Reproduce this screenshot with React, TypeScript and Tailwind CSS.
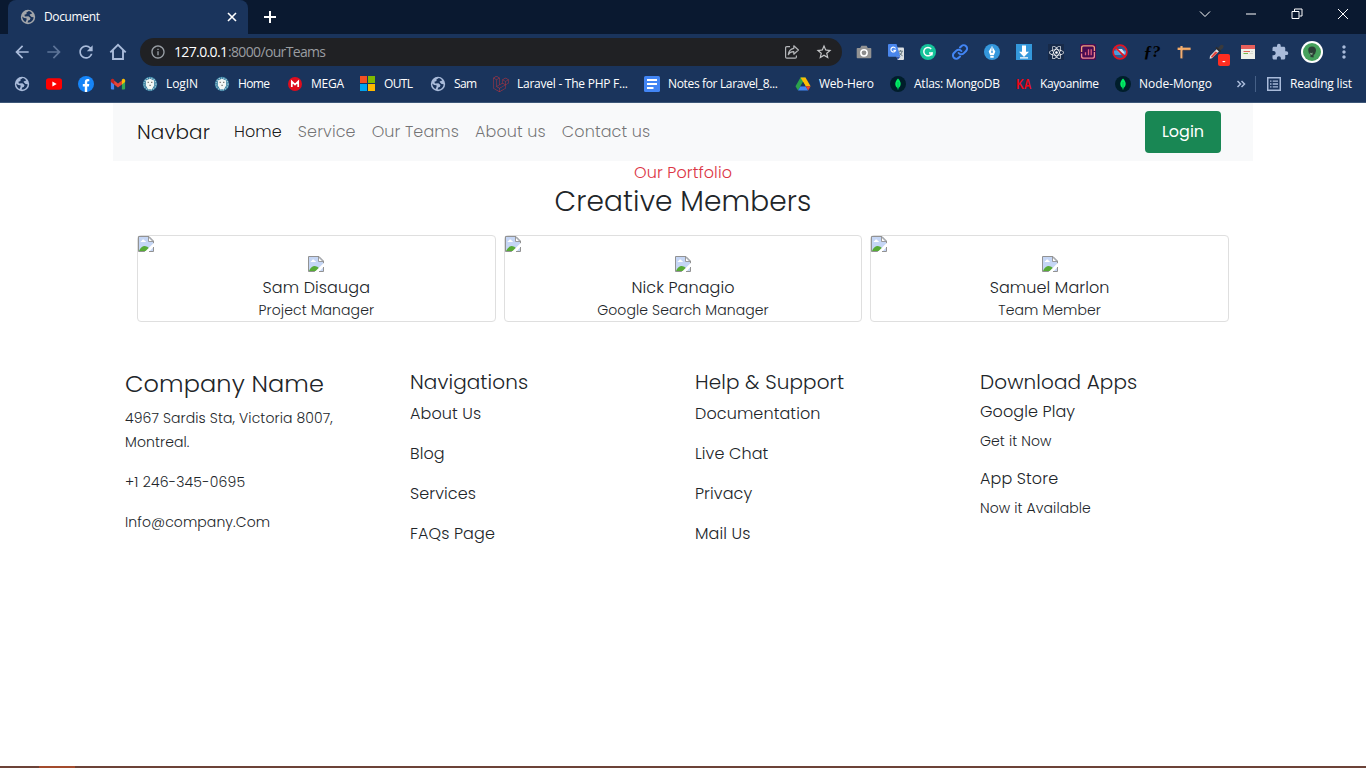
import { useLayoutEffect, useRef, useState, type ReactNode } from "react";
import {
  MdArrowBack,
  MdArrowForward,
  MdExtension,
  MdInfoOutline,
  MdMoreVert,
  MdRefresh,
  MdStarBorder,
} from "react-icons/md";
import { FaLaravel, FaReact } from "react-icons/fa";

/** One line of text whose tracking is adjusted so that it fills a given width. */
function FitText({ w, children, className = "" }: { w: number; children: string; className?: string }) {
  const ref = useRef<HTMLSpanElement>(null);
  const [spacing, setSpacing] = useState(0);
  useLayoutEffect(() => {
    if (ref.current) {
      const natural = ref.current.getBoundingClientRect().width;
      setSpacing((w - natural) / Math.max(1, children.length - 1));
    }
  }, [w, children]);
  return (
    <span className={`inline-block whitespace-nowrap ${className}`} style={{ width: w }}>
      <span ref={ref} style={{ letterSpacing: spacing }}>
        {children}
      </span>
    </span>
  );
}

/* ---------- icons ---------- */

const Globe = ({ color, hole }: { color: string; hole: string }) => (
  <svg width="16" height="16" viewBox="0 0 16 16">
    <circle cx="8" cy="8" r="7.2" fill={color} />
    <path d="M8.8 2 L6.4 3.6 L6.6 5 L4.4 5.8 L4.9 7.4 L8.4 7.3 L10.5 9 L9.8 10.9 L8.2 11.4 L7.6 13.6 C11 13.7 13.6 11.2 13.6 8.2 L11.6 7.9 L10 6.6 L9.6 5.4 L12.2 4.6 C11.3 3.1 10 2.2 8.8 2Z M2.3 7.4 L4.1 8.9 L6.5 9.3 L6.6 10.8 L5.6 13 C3.6 12 2.1 9.7 2.3 7.4Z" fill={hole} />
  </svg>
);

const HomeIcon = () => (
  <svg width="18" height="18" viewBox="0 0 18 18" fill="none" stroke="#a9bbda" strokeWidth="1.9">
    <path d="M1.3 9.4 L9 1.9 L16.7 9.4 M4 7.2 V16 H14 V7.2" />
  </svg>
);

const YouTube = () => (
  <svg width="16" height="16" viewBox="0 0 16 16">
    <rect y="2.2" width="16" height="11.6" rx="2.8" fill="#f00" />
    <path d="M6.4 5.5 L10.7 8 L6.4 10.5Z" fill="#fff" />
  </svg>
);

const Facebook = () => (
  <svg width="16" height="16" viewBox="0 0 16 16">
    <circle cx="8" cy="8" r="8" fill="#1685f8" />
    <path d="M6.8 16 V10.4 H4.8 V8 H6.8 V6.2 C6.8 4.1 8 3.1 9.8 3.1 L11.3 3.2 V5.2 H10.3 C9.5 5.2 9.2 5.6 9.2 6.3 V8 H11.3 L10.9 10.4 H9.2 V16Z" fill="#fff" />
  </svg>
);

const Gmail = () => (
  <svg width="16" height="16" viewBox="0 0 16 16">
    <path d="M.9 4.4 H4.1 V13.5 H2 Q.9 13.5 .9 12.4Z" fill="#4285f4" />
    <path d="M11.9 4.4 H15.1 V12.4 Q15.1 13.5 14 13.5 H11.9Z" fill="#34a853" />
    <path d="M4.1 4.6 L8 7.6 L11.9 4.6 V8.5 L8 11.5 L4.1 8.5Z" fill="#ea4335" />
    <path d="M.9 4.2 Q1 2.4 2.8 2.7 L4.1 3.6 V8.5 L.9 6.1Z" fill="#c5221f" />
    <path d="M15.1 4.2 Q15 2.4 13.2 2.7 L11.9 3.6 V8.5 L15.1 6.1Z" fill="#fbbc04" />
  </svg>
);

const Seal = () => (
  <svg width="16" height="16" viewBox="0 0 16 16">
    <circle cx="8" cy="8" r="7.2" fill="#2f7a9c" />
    <circle cx="8" cy="8" r="6" fill="none" stroke="#a5c6d6" strokeWidth="1.2" strokeDasharray="1.4 1" />
    <path d="M3.8 4.4 L8 2.8 L12.2 4.4 V9.5 L10 13.2 H6 L3.8 9.5Z" fill="#f2f7f5" />
    <path d="M5.6 5.8h1.3v1.3H5.6z M9 5.8h1.4v1.3H9z M7.4 8.7h1.4v1.4H7.4z" fill="#7d7c78" />
  </svg>
);

const Mega = () => (
  <svg width="16" height="16" viewBox="0 0 16 16">
    <circle cx="8" cy="8" r="7" fill="#df0d1d" />
    <path d="M4.8 11 V5.4 L8 8.5 L11.2 5.4 V11" fill="none" stroke="#fff" strokeWidth="1.7" />
  </svg>
);

const Microsoft = () => (
  <svg width="16" height="16" viewBox="0 0 16 16">
    <path d="M0 0h7v7H0z" fill="#f25022" />
    <path d="M8 0h7v7H8z" fill="#7fba00" />
    <path d="M0 8h7v7H0z" fill="#00a4ef" />
    <path d="M8 8h7v7H8z" fill="#ffb900" />
  </svg>
);

const Docs = () => (
  <svg width="16" height="16" viewBox="0 0 16 16">
    <rect width="16" height="16" rx="1.6" fill="#4285f4" />
    <path d="M3 4h10M3 8h10M3 12h6.5" stroke="#fff" strokeWidth="1.8" />
  </svg>
);

const Drive = () => (
  <svg width="16" height="16" viewBox="0 0 16 16">
    <path d="M5.5 1.5 H10.5 L8 6 L3 14.5 L.5 10.2Z" fill="#2ba24c" />
    <path d="M5.5 1.5 H10.5 L15.6 10.2 H10.6Z" fill="#fbbc04" />
    <path d="M5.5 10.2 H10.6 L13.2 14.5 H3Z" fill="#4285f4" />
    <path d="M10.6 10.2 H15.6 L13.2 14.5Z" fill="#ea4335" />
    <path d="M8 6 L10.5 10.2 H5.5Z" fill="#1a345c" />
  </svg>
);

const Mongo = () => (
  <svg width="16" height="16" viewBox="0 0 16 16">
    <circle cx="8" cy="8" r="8" fill="#001e2b" />
    <path d="M8 2.5 C11.6 6 11.5 10 8.4 12.1 L8.2 13.7 H7.8 L7.6 12.1 C4.5 10 4.4 6 8 2.5Z" fill="#00ed64" />
    <path d="M8 6 V13" stroke="#00a651" strokeWidth=".7" />
  </svg>
);

const Camera = () => (
  <svg width="16" height="16" viewBox="0 0 16 16">
    <path d="M1.5 4 H4.2 L5.4 1.8 H10.6 L11.8 4 H14.5 Q15.3 4 15.3 4.8 V13.3 Q15.3 14.2 14.5 14.2 H1.5 Q.7 14.2 .7 13.3 V4.8 Q.7 4 1.5 4Z" fill="#939393" />
    <circle cx="8" cy="8.8" r="3.9" fill="#fff" />
    <circle cx="8" cy="8.8" r="2.4" fill="#8d8d8d" />
  </svg>
);

const Translate = () => (
  <svg width="16" height="16" viewBox="0 0 16 16">
    <path d="M6 3.4 H15 Q16 3.4 16 4.4 V15 Q16 16 15 16 H9.5Z" fill="#dbdfe2" />
    <path d="M1 0 H8.5 L12.4 12.7 H1 Q0 12.7 0 11.7 V1 Q0 0 1 0Z" fill="#4a86ec" />
    <path d="M8.7 12.7 H12.4 L9.5 16Z" fill="#3155b0" />
    <path d="M7.5 4.5 A2.4 2.4 0 1 0 7.6 6.4 H5.4" fill="none" stroke="#fff" strokeWidth="1.1" />
    <path d="M10.6 7.2h4.2M12.6 6v1.2M14.2 7.4Q13.4 10.3 11.6 11.2M11.4 8.6Q12.6 11 14.6 11.8" fill="none" stroke="#65767d" />
  </svg>
);

const Grammarly = () => (
  <svg width="16" height="16" viewBox="0 0 16 16">
    <circle cx="8" cy="8" r="8" fill="#15c39a" />
    <path d="M11.2 4.9 A4.2 4.2 0 1 0 12 8.9 H9" fill="none" stroke="#fff" strokeWidth="1.5" />
    <path d="M12 8.5 V11.4" stroke="#fff" strokeWidth="1.2" />
  </svg>
);

const LinkIcon = () => (
  <svg width="16" height="16" viewBox="0 0 24 24" fill="none" stroke="#4285f4" strokeWidth="3" strokeLinecap="round">
    <path d="M10 13.5a5 5 0 0 0 7.5.5l3.6-3.6a5 5 0 0 0-7.1-7.1l-2 2" />
    <path d="M14 10.5a5 5 0 0 0-7.5-.5l-3.6 3.6a5 5 0 0 0 7.1 7.1l2-2" />
  </svg>
);

const Pen = () => (
  <svg width="16" height="16" viewBox="0 0 16 16">
    <circle cx="8" cy="8" r="8" fill="#3497dc" />
    <path d="M8 2 L11.3 7.5 L9.8 11.2 H6.2 L4.7 7.5Z M6.3 12h3.4v1.7H6.3z" fill="#fff" />
    <path d="M8 3 V7.5" stroke="#3497dc" strokeWidth=".7" />
    <circle cx="8" cy="8" r=".9" fill="#3497dc" />
  </svg>
);

const Download = () => (
  <svg width="16" height="16" viewBox="0 0 16 16">
    <path d="M0 0h16v16H0z" fill="#3498db" />
    <path d="M6 1.5 H10 V7.8 H13 L8 13 L3 7.8 H6Z M4 13.2h8v1.2H4z" fill="#fff" />
  </svg>
);

const Chart = () => (
  <svg width="16" height="16" viewBox="0 0 16 16">
    <rect width="16" height="16" rx="1.5" fill="#480b52" />
    <path d="M1.6 8 V3.8 Q1.6 1.8 3.7 1.8 H12.3 Q14.4 1.8 14.4 3.8 V7" fill="none" stroke="#f2a07a" strokeWidth="1.3" />
    <path d="M14.4 8 V12.2 Q14.4 14.2 12.3 14.2 H3.7 Q1.6 14.2 1.6 12.2 V9.5" fill="none" stroke="#ee8a91" strokeWidth="1.3" />
    <path d="M5.5 11.3V8.3M8.5 11.3V5.2M11.2 11.3V5.2" stroke="#e0607f" strokeWidth="1.3" />
  </svg>
);

const Blocked = () => (
  <svg width="16" height="16" viewBox="0 0 16 16">
    <circle cx="8" cy="8" r="6.7" fill="#2f5d94" />
    <path d="M2 6.5h12v4.5H2z" fill="#4c9bdc" />
    <path d="M3.5 5h6.5l3 4.5H8z" fill="#d4e1ee" />
    <circle cx="8" cy="8" r="6.9" fill="none" stroke="#e21422" strokeWidth="1.7" />
    <path d="M3.3 3.3 L12.7 12.7" stroke="#e21422" strokeWidth="1.8" />
  </svg>
);

const Ruler = () => (
  <svg width="16" height="16" viewBox="0 0 16 16">
    <path d="M1.6 3.6h13v2.4h-13z" fill="#f6ab66" />
    <path d="M4.4 2h2.2v12.4H4.4z" fill="#f2ae70" />
    <path d="M7 6.3h7.2M6.9 7v7" stroke="#5c4a45" strokeWidth=".7" />
  </svg>
);

const Dropper = () => (
  <svg width="16" height="16" viewBox="0 0 16 16">
    <path d="M9.6 4.6 L12.4 1.2 Q14.2 .2 15.4 1.6 Q16 3 14.8 4.2 L11.7 6.8Z" fill="#3a3a3c" />
    <path d="M8 3.4 L12.5 7.9" stroke="#2c2c2e" strokeWidth="2" />
    <path d="M8.6 5.2 L10.9 7.4 L4 14.2 L1.6 14.8 L2 12.1Z" fill="#dfdfdf" />
    <path d="M7.4 7.6 L9.8 8.4 L4 14 L3 12.6Z" fill="#e3443b" />
  </svg>
);

const Page = () => (
  <svg width="16" height="16" viewBox="0 0 16 16">
    <path d="M1 1h14v14H1z" fill="#eef0ea" />
    <path d="M1 1h14v4H1z" fill="#e65f5b" />
    <path d="M3.5 7.5H10" stroke="#e2625a" />
    <path d="M3.5 9.5H8" stroke="#79b94d" />
    <path d="M11 7.5h2M9.5 9.5H13" stroke="#d5d8d0" />
  </svg>
);

const Avatar = () => (
  <svg width="22" height="22" viewBox="0 0 22 22">
    <circle cx="11" cy="11" r="11" fill="#fff" />
    <circle cx="11" cy="11" r="9" fill="#46a15c" />
    <path d="M7.2 9.2 Q7.2 5.6 11 5.6 Q15.2 5.8 15 9.8 L14 13 L12.6 14 V16.4 L9.4 16 L9.6 13.6 L7.8 12Z" fill="#2b3f36" />
    <path d="M8.6 11.4 L10.4 12.2 L11.4 11.6 L11.6 13.6 L10 13.8Z" fill="#8aaf92" />
  </svg>
);

const Share = () => (
  <svg width="16" height="16" viewBox="0 0 16 16" fill="none" stroke="#b4b6b9" strokeWidth="1.2" strokeLinejoin="round">
    <path d="M6 2.6 H2.8 Q1.6 2.6 1.6 3.8 V13 Q1.6 14.2 2.8 14.2 H11.2 Q12.4 14.2 12.4 13 V11.6" />
    <path d="M9.8 1.8 L14.4 6 L9.8 10.2 V7.7 C7 7.6 5.3 8.7 4.3 10.6 C4.7 6.8 6.7 4.8 9.8 4.3Z" />
  </svg>
);

const ReadingList = () => (
  <svg width="14" height="14" viewBox="0 0 14 14" fill="none" stroke="#a9bbda" strokeWidth="1.5">
    <path d="M.75 .75h12.5v12.5H.75z" />
    <path d="M3 4.2h1.5M5.7 4.2H11M3 7h1.5M5.7 7H11M3 9.8h1.5M5.7 9.8H11" strokeWidth="1.3" />
  </svg>
);

const BrokenImage = () => (
  <svg width="16" height="16" viewBox="0 0 16 16" className="block shrink-0">
    <path d="M.5 .5 H11 L15.5 5 V15.5 H.5Z" fill="#c5d6f5" />
    <path d="M2.6 6.1 Q2.5 4.8 3.8 4.7 Q4.2 3.2 5.6 3.6 Q6.7 3.9 6.8 5 Q8 5.1 8 6.1Z" fill="#fff" />
    <path d="M1 15 Q3.2 10.1 6.8 10 Q9.5 10 11.5 12.5 L12 15Z" fill="#57ab36" />
    <path d="M16 6.8 L6.6 16 H11 L16 10.6Z" fill="#fff" />
    <path d="M6.8 15.5 H.5 V.5 H11 L15.5 5 V7.2 M15.5 11 V15.5 H11" fill="none" stroke="#929292" />
    <path d="M10.5 1 V5.5 H15Z" fill="#fff" stroke="#929292" strokeWidth=".9" />
  </svg>
);

/* ---------- browser chrome ---------- */

const extensions: ReactNode[] = [
  <Camera />,
  <Translate />,
  <Grammarly />,
  <LinkIcon />,
  <Pen />,
  <Download />,
  <span className="flex size-4 items-center justify-center bg-[#172a49]">
    <FaReact size={15} color="#fff" />
  </span>,
  <Chart />,
  <Blocked />,
  <span className="font-['Liberation_Serif',serif] text-[17px] leading-4 font-bold text-black italic">ƒ?</span>,
  <Ruler />,
  <span className="relative">
    <Dropper />
    <span className="absolute top-[10px] left-[10px] flex h-3 w-3 items-center justify-center rounded-xs bg-[#ff2d20] text-[9px] leading-none font-bold text-white">
      -
    </span>
  </span>,
  <Page />,
  <MdExtension size={18} color="#a9bbda" />,
  <Avatar />,
  <MdMoreVert size={20} color="#a9bbda" />,
];

type Bookmark = { icon: ReactNode; slot: string; label?: string; w?: number };

const bookmarks: Bookmark[] = [
  { icon: <Globe color="#a9bbda" hole="#1a345c" />, slot: "w-8" },
  { icon: <YouTube />, slot: "w-8" },
  { icon: <Facebook />, slot: "w-8" },
  { icon: <Gmail />, slot: "w-8" },
  { icon: <Seal />, slot: "w-[72px]", label: "LogIN", w: 32 },
  { icon: <Seal />, slot: "w-[73px]", label: "Home", w: 32 },
  { icon: <Mega />, slot: "w-[73px]", label: "MEGA", w: 33 },
  { icon: <Microsoft />, slot: "w-[70px]", label: "OUTL", w: 29 },
  { icon: <Globe color="#a9bbda" hole="#1a345c" />, slot: "w-[63px]", label: "Sam", w: 23 },
  { icon: <FaLaravel size={16} color="#b8343f" />, slot: "w-[151px]", label: "Laravel - The PHP F...", w: 111 },
  { icon: <Docs />, slot: "w-[151px]", label: "Notes for Laravel_8...", w: 110 },
  { icon: <Drive />, slot: "w-[95px]", label: "Web-Hero", w: 55 },
  { icon: <Mongo />, slot: "w-[126px]", label: "Atlas: MongoDB", w: 86 },
  {
    icon: (
      <span className="origin-center scale-x-70 font-['Liberation_Sans',sans-serif] text-[15px] font-bold text-[#f00614]">
        KA
      </span>
    ),
    slot: "w-[99px]",
    label: "Kayoanime",
    w: 59,
  },
  { icon: <Mongo />, slot: "w-[121px]", label: "Node-Mongo", w: 73 },
];

const windowControls = [
  "M.5 3 L5.5 8 L10.5 3",
  "M.5 5.5H10.5",
  "M.5 3H7.5V10H.5Z M3 2.5V.5H10.5V7.5H8",
  "M.5 .5 L10.5 10.5 M10.5 .5 L.5 10.5",
];

function BrowserChrome() {
  return (
    <header className="h-[103px] border-b border-[#3d5778] bg-[#1a345c] font-['Open_Sans','Noto_Sans',sans-serif] text-xs text-white">
      <div className="flex h-[34px] bg-[#0a1930] pl-2">
        <div className="flex w-60 items-center rounded-t-lg bg-[#1a345c] pr-2.5 pl-3">
          <Globe color="#a3a6aa" hole="#1a345c" />
          <FitText w={56} className="ml-2">Document</FitText>
          <svg width="12" height="12" viewBox="0 0 12 12" className="ml-auto" stroke="#fff" strokeWidth="1.6">
            <path d="M2 2 L10 10 M10 2 L2 10" />
          </svg>
        </div>
        <div className="flex w-11 items-center justify-center">
          <svg width="12" height="12" viewBox="0 0 12 12" stroke="#fff" strokeWidth="2">
            <path d="M6 0V12M0 6H12" />
          </svg>
        </div>
        <div className="ml-auto flex h-7 items-center">
          {windowControls.map((d) => (
            <span key={d} className="flex w-[46px] justify-center">
              <svg width="12" height="12" viewBox="-.5 -.5 12 12" fill="none" stroke="#fff">
                <path d={d} />
              </svg>
            </span>
          ))}
        </div>
      </div>

      <div className="flex h-9 items-center pl-1.5">
        <span className="flex w-8 justify-center"><MdArrowBack size={20} color="#a9bbda" /></span>
        <span className="flex w-8 justify-center"><MdArrowForward size={20} color="#5d7498" /></span>
        <span className="flex w-8 justify-center"><MdRefresh size={20} color="#a9bbda" /></span>
        <span className="flex w-8 justify-center"><HomeIcon /></span>
        <div className="ml-1.5 flex h-7 w-[702px] items-center rounded-full bg-[#202124] pr-0.5 pl-2.5 text-sm">
          <MdInfoOutline size={16} color="#9aa0a6" />
          <FitText w={54} className="ml-2">127.0.0.1</FitText>
          <FitText w={98} className="text-[#9a9da1]">:8000/ourTeams</FitText>
          <span className="ml-auto flex w-8 justify-center"><Share /></span>
          <span className="flex w-8 justify-center"><MdStarBorder size={18} color="#c4c6c8" /></span>
        </div>
        <div className="ml-1.5 flex">
          {extensions.map((icon, i) => (
            <span key={i} className="flex w-8 items-center justify-center">{icon}</span>
          ))}
        </div>
      </div>

      <div className="flex h-7 items-center pl-3.5">
        {bookmarks.map((b, i) => (
          <span key={i} className={`flex shrink-0 items-center gap-2 ${b.slot}`}>
            <span className="flex size-4 items-center justify-center">{b.icon}</span>
            {b.label && b.w && <FitText w={b.w}>{b.label}</FitText>}
          </span>
        ))}
        <svg width="10" height="10" viewBox="0 0 10 10" fill="none" stroke="#a9bbda" strokeWidth="1.5">
          <path d="M1.5 2 L4.5 5 L1.5 8 M5.5 2 L8.5 5 L5.5 8" />
        </svg>
        <span className="ml-[9px] h-4 w-px bg-[#466087]" />
        <span className="ml-[11px]"><ReadingList /></span>
        <FitText w={62} className="ml-[9px]">Reading list</FitText>
      </div>
    </header>
  );
}

/* ---------- page ---------- */

const links = ["Home", "Service", "Our Teams", "About us", "Contact us"];

const members = [
  { name: "Sam Disauga", role: "Project Manager" },
  { name: "Nick Panagio", role: "Google Search Manager" },
  { name: "Samuel Marlon", role: "Team Member" },
];

const linkColumns = [
  { title: "Navigations", items: ["About Us", "Blog", "Services", "FAQs Page"] },
  { title: "Help & Support", items: ["Documentation", "Live Chat", "Privacy", "Mail Us"] },
];

export default function App() {
  return (
    <div className="flex h-screen flex-col overflow-hidden bg-white">
      <BrowserChrome />
      <main className="mx-auto w-[1140px] grow font-[Poppins,Inter,sans-serif] text-base font-light tracking-[0.1px] text-[#212529]">
        <nav className="flex h-[58px] items-center bg-[#f8f9fa] pr-8 pl-6">
          <a className="mr-6 text-xl text-black/90">Navbar</a>
          <div className="flex gap-4">
            {links.map((label, i) => (
              <a key={label} className={i === 0 ? "text-black/90" : "text-black/55"}>{label}</a>
            ))}
          </div>
          <button className="ml-auto flex h-[42px] w-[76px] items-center justify-center rounded bg-[#198754] font-normal tracking-normal text-white">
            Login
          </button>
        </nav>

        <section className="flex h-[161px] flex-col items-center">
          <p className="leading-6 text-[#dc3545]">Our Portfolio</p>
          <h1 className="text-[28px] leading-[34px]">Creative Members</h1>
          <div className="mt-4 grid w-[1092px] grid-cols-3 gap-2">
            {members.map((m) => (
              <article key={m.name} className="flex h-[87px] flex-col rounded border border-[#dfdfdf]">
                <BrokenImage />
                <div className="mt-1 flex flex-col items-center">
                  <BrokenImage />
                  <h2 className="mt-1 leading-6">{m.name}</h2>
                  <p className="text-sm leading-[21px]">{m.role}</p>
                </div>
              </article>
            ))}
          </div>
        </section>

        <footer className="mt-12 grid grid-cols-4 *:pl-3">
          <div className="text-sm leading-6">
            <h2 className="mb-2 text-2xl leading-7">Company Name</h2>
            <p className="w-[220px]">4967 Sardis Sta, Victoria 8007, Montreal.</p>
            <p className="mt-4 tracking-[0.2px]">+1 246-345-0695</p>
            <p className="mt-4">Info@company.Com</p>
          </div>
          {linkColumns.map((c) => (
            <div key={c.title}>
              <h3 className="mb-2 text-xl leading-6">{c.title}</h3>
              <div className="flex flex-col gap-4">
                {c.items.map((label) => (
                  <a key={label}>{label}</a>
                ))}
              </div>
            </div>
          ))}
          <div>
            <h3 className="mb-2 text-xl leading-6">Download Apps</h3>
            <h4 className="leading-5">Google Play</h4>
            <p className="mt-[9px] text-sm leading-[21px]">Get it Now</p>
            <h4 className="mt-[17px] leading-5">App Store</h4>
            <p className="mt-[9px] text-sm leading-[21px]">Now it Available</p>
          </div>
        </footer>
      </main>
      <div className="h-0.5 shrink-0 bg-[#6c4338] pl-[39px]">
        <div className="h-0.5 w-9 bg-[#a34b2d]" />
      </div>
    </div>
  );
}
